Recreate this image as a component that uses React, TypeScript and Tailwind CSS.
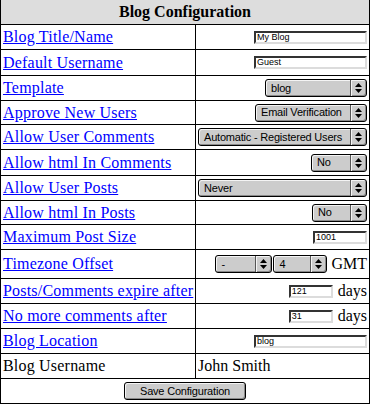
import React from "react";

const serif = "font-['Liberation_Serif',_'Times_New_Roman',serif]";
const sans = "font-['Liberation_Sans',Arial,sans-serif]";

function Arrows() {
  return (
    <svg width="7" height="10" viewBox="0 0 7 10">
      <polygon points="0,4 3.5,0 7,4" fill="#000" />
      <polygon points="0,6 3.5,10 7,6" fill="#000" />
    </svg>
  );
}

function Select({ value, className }: { value: string; className: string }) {
  return (
    <div
      className={`flex h-[18px] items-stretch rounded-[3px] border border-black bg-[#cccccc] shadow-[inset_1px_1px_0_#f4f4f4,inset_-1px_-1px_0_#8a8a8a] ${className}`}
    >
      <div className={`flex flex-1 items-center pl-[5px] text-[11px] tracking-[-0.2px] text-black ${sans}`}>
        {value}
      </div>
      <div className="flex w-[16px] items-center justify-center border-l border-[#555] shadow-[inset_1px_0_0_#f4f4f4]">
        <Arrows />
      </div>
    </div>
  );
}

function TextBox({ value, className }: { value: string; className: string }) {
  return (
    <div
      className={`flex h-[13px] items-center border-2 border-t-[#333] border-l-[#333] border-b-[#dcdcdc] border-r-[#dcdcdc] bg-white pl-[1px] text-[9px] leading-none text-black ${sans} ${className}`}
    >
      {value}
    </div>
  );
}

function Row({
  h,
  label,
  link = true,
  children,
}: {
  h: string;
  label: string;
  link?: boolean;
  children: React.ReactNode;
}) {
  return (
    <div className={`flex border-b border-black ${h}`}>
      <div className="flex w-[194px] items-center pl-[2px]">
        {link ? (
          <a href="#" className={`text-[16px] leading-none tracking-[0.2px] text-[#0000ff] underline ${serif}`}>
            {label}
          </a>
        ) : (
          <span className={`text-[16px] leading-none tracking-[0.2px] text-black ${serif}`}>{label}</span>
        )}
      </div>
      <div className="flex flex-1 items-center justify-end border-l border-black px-[2px]">{children}</div>
    </div>
  );
}

export default function App() {
  return (
    <div className="w-[370px] border-x border-black bg-white">
      <div className={`flex h-[25px] items-center justify-center border-b border-black bg-[#dddddd] text-[16px] font-bold ${serif}`}>
        Blog Configuration
      </div>
      <Row h="h-[25px]" label="Blog Title/Name">
        <TextBox value="My Blog" className="w-[113px]" />
      </Row>
      <Row h="h-[26px]" label="Default Username">
        <TextBox value="Guest" className="w-[113px]" />
      </Row>
      <Row h="h-[25px]" label="Template">
        <Select value="blog" className="w-[102px]" />
      </Row>
      <Row h="h-[24px]" label="Approve New Users">
        <Select value="Email Verification" className="w-[112px]" />
      </Row>
      <Row h="h-[25px]" label="Allow User Comments">
        <Select value="Automatic - Registered Users" className="w-full" />
      </Row>
      <Row h="h-[26px]" label="Allow html In Comments">
        <Select value="No" className="w-[56px]" />
      </Row>
      <Row h="h-[25px]" label="Allow User Posts">
        <Select value="Never" className="w-full" />
      </Row>
      <Row h="h-[24px]" label="Allow html In Posts">
        <Select value="No" className="w-[55px]" />
      </Row>
      <Row h="h-[25px]" label="Maximum Post Size">
        <TextBox value="1001" className="w-[54px]" />
      </Row>
      <Row h="h-[29px]" label="Timezone Offset">
        <div className="flex items-center gap-[1px]">
          <Select value="-" className="w-[57px]" />
          <Select value="4" className="w-[54px]" />
        </div>
        <span className={`ml-[4px] text-[16px] leading-none ${serif}`}>GMT</span>
      </Row>
      <Row h="h-[25px]" label="Posts/Comments expire after">
        <TextBox value="121" className="w-[44px]" />
        <span className={`ml-[5px] text-[16px] leading-none ${serif}`}>days</span>
      </Row>
      <Row h="h-[25px]" label="No more comments after">
        <TextBox value="31" className="w-[44px]" />
        <span className={`ml-[5px] text-[16px] leading-none ${serif}`}>days</span>
      </Row>
      <Row h="h-[25px]" label="Blog Location">
        <TextBox value="blog" className="w-[113px]" />
      </Row>
      <div className="flex h-[25px] border-b border-black">
        <div className="flex w-[194px] items-center pl-[2px]">
          <span className={`text-[16px] leading-none tracking-[0.2px] text-black ${serif}`}>Blog Username</span>
        </div>
        <div className={`flex flex-1 items-center border-l border-black px-[2px] text-[16px] leading-none ${serif}`}>
          John Smith
        </div>
      </div>
      <div className="flex h-[25px] items-center justify-center border-b border-black">
        <button
          className={`flex h-[18px] w-[122px] items-center justify-center rounded-[3px] border border-black bg-[#cccccc] text-[11px] tracking-[-0.2px] text-black shadow-[inset_1px_1px_0_#f4f4f4,inset_-1px_-1px_0_#8a8a8a] ${sans}`}
        >
          Save Configuration
        </button>
      </div>
    </div>
  );
}
